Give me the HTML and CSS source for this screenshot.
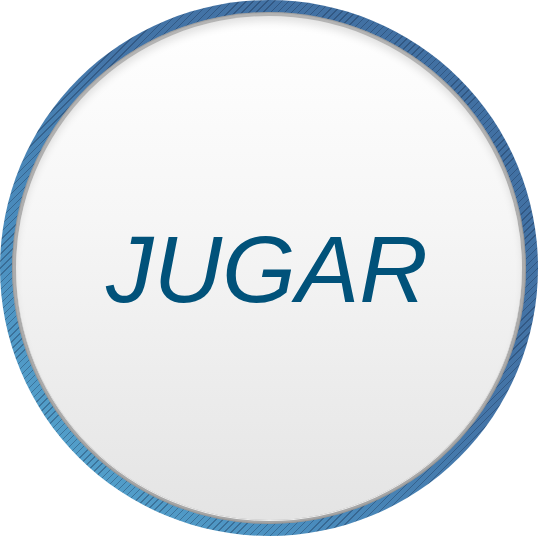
FILE: index.html
```html
<!DOCTYPE html>
<html>
<head>
<meta charset="utf-8">
<link rel="stylesheet" href="styles.css">
</head>
<body>
<div class="ring">
  <div class="bezel">
    <div class="face">
      <span class="label">JUGAR</span>
    </div>
  </div>
</div>
</body>
</html>
```

FILE: styles.css
```css
html, body {
  margin: 0;
  padding: 0;
  background: #ffffff;
}
.ring {
  width: 538px;
  height: 536px;
  box-sizing: border-box;
  border-radius: 50%;
  padding: 12px;
  background:
    repeating-linear-gradient(-45deg, rgba(20,40,70,0) 0 4px, rgba(20,40,70,0.35) 4px 5px),
    linear-gradient(45deg, #5ab0d6 0%, #4a8cbd 30%, #4475a8 55%, #406ea0 100%);
}
.bezel {
  width: 100%;
  height: 100%;
  box-sizing: border-box;
  border-radius: 50%;
  padding: 4px;
  background: linear-gradient(180deg, #b4b4b4 0%, #a6a6a6 100%);
  box-shadow: inset 0 0 0 1px rgba(120,120,120,0.35);
}
.face {
  width: 100%;
  height: 100%;
  box-sizing: border-box;
  border-radius: 50%;
  background: linear-gradient(180deg, #ffffff 0%, #f6f6f6 40%, #e4e4e4 100%);
  box-shadow: inset 0 7px 9px -2px rgba(0,0,0,0.12), 0 1px 0 rgba(255,255,255,0.8);
  display: flex;
  align-items: center;
  justify-content: center;
}
.label {
  font-family: "Liberation Sans", Arial, sans-serif;
  font-style: italic;
  font-size: 95px;
  color: #01527a;
  line-height: 1;
  margin-top: 2px;
  margin-left: -4px;
}
```
